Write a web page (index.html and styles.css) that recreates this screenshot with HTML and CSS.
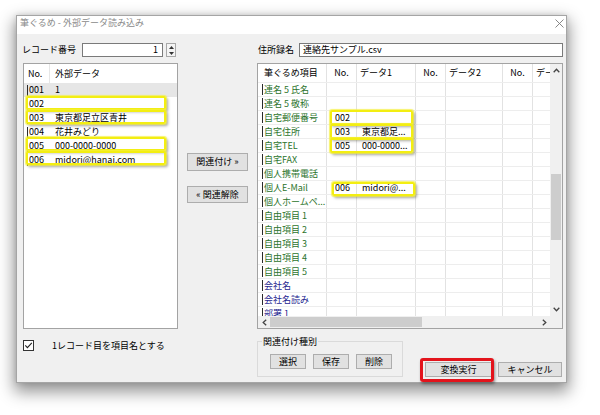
FILE: index.html
```html
<!DOCTYPE html>
<html lang="ja">
<head>
<meta charset="utf-8">
<title>筆ぐるめ - 外部データ読み込み</title>
<link rel="stylesheet" href="styles.css">
</head>
<body>
<div class="dialog">
  <div class="titlebar">
    <span class="title">筆ぐるめ - 外部データ読み込み</span>
    <svg class="close" width="9" height="9" viewBox="0 0 9 9"><path d="M0.5 0.5L8.5 8.5M8.5 0.5L0.5 8.5" stroke="#7a7a7a" stroke-width="0.9" fill="none"/></svg>
  </div>
  <div class="content">
    <div class="rec-row">
      <span class="rec-lbl">レコード番号</span>
      <div class="input num">1</div>
      <div class="spin">
        <span class="spin-half"><svg width="5" height="3" viewBox="0 0 5 3"><path d="M0 3L2.5 0L5 3Z" fill="#333"/></svg></span>
        <span class="spin-half"><svg width="5" height="3" viewBox="0 0 5 3"><path d="M0 0L2.5 3L5 0Z" fill="#333"/></svg></span>
      </div>
    </div>
    <div></div>
    <div class="addr-row">
      <span class="addr-lbl">住所録名</span>
      <div class="input addr">連絡先サンプル.csv</div>
    </div>

    <div class="reclist">
      <div class="rl-head"><span class="rl-no">No.</span><span class="rl-data">外部データ</span></div>
      <div class="rl-row sel"><span class="rl-no"><i class="mark"></i>001</span><span class="rl-data">1</span></div>
      <div class="rl-row"><span class="rl-no"><i class="mark"></i>002</span><span class="rl-data"></span></div>
      <div class="rl-row"><span class="rl-no"><i class="mark"></i>003</span><span class="rl-data">東京都足立区青井</span></div>
      <div class="rl-row"><span class="rl-no"><i class="mark"></i>004</span><span class="rl-data">花井みどり</span></div>
      <div class="rl-row"><span class="rl-no"><i class="mark"></i>005</span><span class="rl-data">000-0000-0000</span></div>
      <div class="rl-row"><span class="rl-no"><i class="mark"></i>006</span><span class="rl-data">midori@hanai.com</span></div>
      <span class="hl hl-l2"></span>
      <span class="hl hl-l3"></span>
      <span class="hl hl-l5"></span>
      <span class="hl hl-l6"></span>
    </div>
    <div class="mid">
      <button class="btn mid-btn link">関連付け »</button>
      <button class="btn mid-btn unlink">« 関連解除</button>
    </div>
    <div class="grid">
      <div class="grid-main">
        <div class="cells">
          <div class="g-row g-head"><div>筆ぐるめ項目</div><div class="c">No.</div><div>データ1</div><div class="c">No.</div><div>データ2</div><div class="c">No.</div><div>デー</div></div>
          <div class="g-row"><div class="nm green"><i class="mark"></i>連名 5 氏名</div><div></div><div></div><div></div><div></div><div></div><div></div></div>
          <div class="g-row"><div class="nm green"><i class="mark"></i>連名 5 敬称</div><div></div><div></div><div></div><div></div><div></div><div></div></div>
          <div class="g-row"><div class="nm green"><i class="mark"></i>自宅郵便番号</div><div class="no">002</div><div class="dt"></div><div></div><div></div><div></div><div></div></div>
          <div class="g-row"><div class="nm green"><i class="mark"></i>自宅住所</div><div class="no">003</div><div class="dt">東京都足...</div><div></div><div></div><div></div><div></div></div>
          <div class="g-row"><div class="nm green"><i class="mark"></i>自宅TEL</div><div class="no">005</div><div class="dt">000-0000...</div><div></div><div></div><div></div><div></div></div>
          <div class="g-row"><div class="nm green"><i class="mark"></i>自宅FAX</div><div></div><div></div><div></div><div></div><div></div><div></div></div>
          <div class="g-row"><div class="nm green"><i class="mark"></i>個人携帯電話</div><div></div><div></div><div></div><div></div><div></div><div></div></div>
          <div class="g-row"><div class="nm green"><i class="mark"></i>個人E-Mail</div><div class="no">006</div><div class="dt">midori@...</div><div></div><div></div><div></div><div></div></div>
          <div class="g-row"><div class="nm green"><i class="mark"></i>個人ホームペ...</div><div></div><div></div><div></div><div></div><div></div><div></div></div>
          <div class="g-row"><div class="nm green"><i class="mark"></i>自由項目 1</div><div></div><div></div><div></div><div></div><div></div><div></div></div>
          <div class="g-row"><div class="nm green"><i class="mark"></i>自由項目 2</div><div></div><div></div><div></div><div></div><div></div><div></div></div>
          <div class="g-row"><div class="nm green"><i class="mark"></i>自由項目 3</div><div></div><div></div><div></div><div></div><div></div><div></div></div>
          <div class="g-row"><div class="nm green"><i class="mark"></i>自由項目 4</div><div></div><div></div><div></div><div></div><div></div><div></div></div>
          <div class="g-row"><div class="nm green"><i class="mark"></i>自由項目 5</div><div></div><div></div><div></div><div></div><div></div><div></div></div>
          <div class="g-row"><div class="nm blue"><i class="mark"></i>会社名</div><div></div><div></div><div></div><div></div><div></div><div></div></div>
          <div class="g-row"><div class="nm blue"><i class="mark"></i>会社名読み</div><div></div><div></div><div></div><div></div><div></div><div></div></div>
          <div class="g-row"><div class="nm blue"><i class="mark"></i>部署 1</div><div></div><div></div><div></div><div></div><div></div><div></div></div>
        </div>
        <div class="vscroll">
          <span class="arr"><svg width="7" height="5" viewBox="0 0 7 5"><path d="M0.7 4.2L3.5 1.2L6.3 4.2" stroke="#444" stroke-width="1.3" fill="none"/></svg></span>
          <span class="vthumb"></span>
          <span class="arr arr-end"><svg width="7" height="5" viewBox="0 0 7 5"><path d="M0.7 0.8L3.5 3.8L6.3 0.8" stroke="#444" stroke-width="1.3" fill="none"/></svg></span>
        </div>
      </div>
      <div class="hscroll">
        <span class="harr"><svg width="5" height="7" viewBox="0 0 5 7"><path d="M4.2 0.7L1.2 3.5L4.2 6.3" stroke="#444" stroke-width="1.3" fill="none"/></svg></span>
        <span class="hthumb"></span>
        <span class="harr harr-end"><svg width="5" height="7" viewBox="0 0 5 7"><path d="M0.8 0.7L3.8 3.5L0.8 6.3" stroke="#444" stroke-width="1.3" fill="none"/></svg></span>
        <span class="corner"></span>
      </div>
      <span class="hl hl-g3"></span>
      <span class="hl hl-g4"></span>
      <span class="hl hl-g5"></span>
      <span class="hl hl-g8"></span>
    </div>

    <div class="chk-row">
      <svg class="chk" width="11" height="11" viewBox="0 0 11 11"><rect x="0.5" y="0.5" width="10" height="10" fill="#fff" stroke="#333"/><path d="M2.3 5.4L4.4 7.6L8.8 2.8" stroke="#222" stroke-width="1.1" fill="none"/></svg>
      <span class="chk-lbl">1レコード目を項目名とする</span>
    </div>
    <div></div>
    <div class="actions">
      <div class="group">
        <span class="group-lbl">関連付け種別</span>
        <button class="btn gbtn">選択</button>
        <button class="btn gbtn">保存</button>
        <button class="btn gbtn">削除</button>
      </div>
      <div class="exec-wrap">
        <button class="btn exec">変換実行</button>
        <span class="redbox"></span>
      </div>
      <button class="btn cancel">キャンセル</button>
    </div>
  </div>
</div>
</body>
</html>
```

FILE: styles.css
```css
* { box-sizing: border-box; }
html, body { margin: 0; }
body {
  width: 600px;
  height: 415px;
  overflow: hidden;
  background: #ffffff;
  padding: 15px 0 0 16px;
  font-family: "Noto Sans CJK JP", "Noto Sans", sans-serif;
  font-size: 9px;
  color: #000;
}
.dialog {
  width: 551px;
  height: 368px;
  border: 1px solid #a5a5a5;
  background: #f0f0f0;
  box-shadow: 0 7px 15px 2px rgba(0,0,0,0.42), 0 0 5px rgba(0,0,0,0.12);
  display: flex;
  flex-direction: column;
}
.titlebar {
  height: 19px;
  background: #fff;
  display: flex;
  align-items: center;
  justify-content: space-between;
  padding: 0 2px 4px 3px;
  color: #8a8a8a;
  line-height: 12px;
}
.close { display: block; margin-top: 1px; }

.content {
  flex: 1;
  display: grid;
  grid-template-columns: 156px 79px 306px;
  grid-template-rows: 14px 266px 1fr;
  row-gap: 6px;
  padding: 9px 3px 0 5px;
}

/* top row */
.rec-row, .addr-row { display: flex; align-items: center; }
.rec-lbl { width: 60px; line-height: 14px; }
.input {
  height: 14px;
  border: 1px solid #7a7a7a;
  background: #fff;
  line-height: 12px;
  padding: 0 3px;
  white-space: nowrap;
}
.num { width: 81px; text-align: right; padding-right: 4px; }
.spin {
  width: 10px;
  height: 14px;
  margin-left: 3px;
  border: 1px solid #a8a8a8;
  background: #f4f4f4;
  display: flex;
  flex-direction: column;
}
.spin-half { flex: 1; display: flex; align-items: center; justify-content: center; }
.spin-half svg { display: block; }
.addr-row { padding-left: 1px; }
.addr-lbl { width: 41px; line-height: 14px; }
.addr { flex: 1; padding-left: 3px; }

/* left list */
.reclist {
  position: relative;
  margin-left: 1px;
  width: 155px;
  height: 266px;
  border: 1px solid #a3a3a3;
  background: #fff;
}
.rl-head, .rl-row { display: flex; align-items: center; white-space: nowrap; }
.rl-head { height: 19px; }
.rl-head .rl-no { border-right: 1px solid #e6e6e6; height: 19px; line-height: 19px; padding-left: 4px; }
.rl-row { height: 14px; line-height: 14px; }
.rl-row.sel { background: #e6e6e6; }
.rl-no { width: 26px; padding-left: 3px; display: flex; align-items: center; }
.rl-data { padding-left: 5px; }
.mark {
  display: inline-block;
  width: 1px;
  height: 11px;
  background: #2a2a2a;
  margin-right: 1px;
}

/* highlight overlays */
.hl {
  position: absolute;
  border: 2px solid #f3ee12;
  border-radius: 2px;
  box-shadow: 0 0 1px 1px rgba(246,240,60,0.75), 2px 2px 3px rgba(0,0,0,0.35);
  pointer-events: none;
}
.hl-l2 { left: 2px; top: 32px; width: 140px; height: 14px; }
.hl-l3 { left: 2px; top: 46px; width: 140px; height: 14px; }
.hl-l5 { left: 2px; top: 73px; width: 140px; height: 14px; }
.hl-l6 { left: 2px; top: 87px; width: 140px; height: 14px; }

/* middle buttons */
.mid {
  display: flex;
  flex-direction: column;
  align-items: flex-start;
  padding: 90px 0 0 9px;
  gap: 15px;
}
.btn {
  font: inherit;
  color: #000;
  background: #e1e1e1;
  border: 1px solid #adadad;
  padding: 0;
  line-height: 12px;
  white-space: nowrap;
}
.mid-btn { width: 61px; }
.link { height: 18px; }
.unlink { height: 17px; }

/* right grid */
.grid {
  position: relative;
  width: 306px;
  height: 266px;
  border: 1px solid #a3a3a3;
  background: #fff;
  display: flex;
  flex-direction: column;
}
.grid-main { display: flex; height: 252px; overflow: hidden; }
.cells { width: 292px; overflow: hidden; }
.g-row {
  display: grid;
  grid-template-columns: 69px 30px 59px 30px 57px 30px 17px;
  height: 14px;
  line-height: 13px;
  border-bottom: 1px solid #ededed;
  white-space: nowrap;
}
.g-row > div { border-right: 1px solid #e2e2e2; overflow: hidden; }
.g-row > div:last-child { border-right: 0; }
.g-head { height: 19px; line-height: 18px; }
.g-head > div { padding-left: 3px; }
.g-head > div:first-child { padding-left: 6px; }
.g-head > div.c { padding-left: 0; text-align: center; }
.nm { padding-left: 4px; display: flex; align-items: center; }
.green { color: #2c742c; }
.blue { color: #25258f; }
.no { padding-left: 8px; }
.dt { padding-left: 5px; }

.vscroll {
  width: 12px;
  background: #f0f0f0;
  display: flex;
  flex-direction: column;
  align-items: center;
}
.arr { height: 12px; width: 12px; display: flex; align-items: center; justify-content: center; }
.arr svg, .harr svg { display: block; }
.vthumb { width: 10px; height: 66px; background: #cdcdcd; margin-top: 98px; }
.arr-end { margin-top: auto; margin-bottom: 1px; }

.hscroll { height: 12px; display: flex; background: #f0f0f0; }
.harr { width: 12px; height: 12px; display: flex; align-items: center; justify-content: center; }
.hthumb { width: 152px; height: 10px; margin-top: 1px; background: #cdcdcd; }
.harr-end { margin-left: auto; }
.corner { width: 12px; background: #f0f0f0; }

.hl-g3 { left: 72px; top: 46px; width: 83px; height: 15px; }
.hl-g4 { left: 72px; top: 60px; width: 83px; height: 15px; }
.hl-g5 { left: 72px; top: 74px; width: 83px; height: 15px; }
.hl-g8 { left: 74px; top: 118px; width: 83px; height: 14px; }

/* bottom row */
.chk-row { display: flex; align-items: center; margin-top: 5px; padding-left: 1px; align-self: start; }
.chk { display: block; }
.chk-lbl { margin-left: 18px; line-height: 11px; }

.actions { display: flex; align-items: flex-start; }
.group {
  position: relative;
  margin-top: 6px;
  width: 146px;
  height: 36px;
  border: 1px solid #dadada;
  padding: 12px 0 0 12px;
  display: flex;
  align-items: flex-start;
  gap: 7px;
}
.group-lbl {
  position: absolute;
  left: 4px;
  top: -7px;
  padding: 0 1px;
  background: #f0f0f0;
  line-height: 13px;
}
.gbtn { width: 36px; height: 15px; }
.exec-wrap {
  position: relative;
  margin: 23px 0 0 17px;
  padding: 4px 2px 5px 5px;
}
.exec { display: block; width: 67px; height: 15px; }
.redbox {
  position: absolute;
  inset: 0;
  border: 3px solid #e3141c;
  border-radius: 3px;
  box-shadow: 1px 2px 3px rgba(0,0,0,0.4);
}
.cancel { margin: 27px 0 0 4px; width: 64px; height: 15px; }
```
